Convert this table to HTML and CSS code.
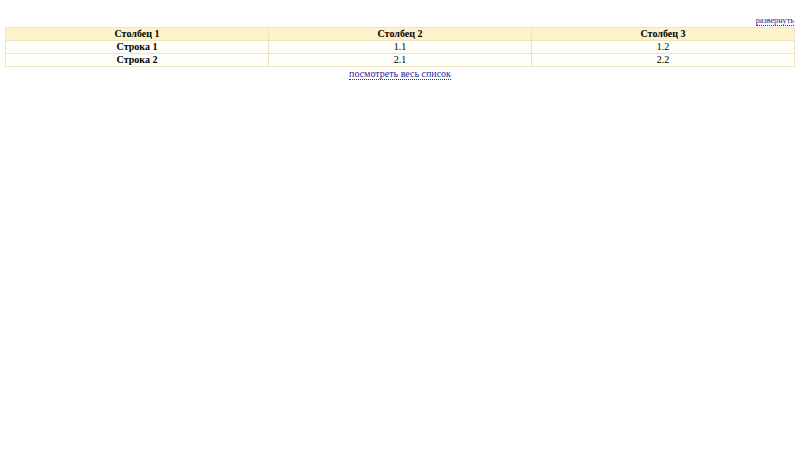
FILE: index.html
```html
<!DOCTYPE html>
<html lang="ru">
<head>
<meta charset="utf-8">
<link rel="stylesheet" href="styles.css">
</head>
<body>
<div class="wrap">
  <div class="tools"><a class="dotted small" href="#">развернуть</a></div>
  <table class="grid">
    <thead>
      <tr><th>Столбец 1</th><th>Столбец 2</th><th>Столбец 3</th></tr>
    </thead>
    <tbody>
      <tr><th>Строка 1</th><td>1.1</td><td>1.2</td></tr>
      <tr><th>Строка 2</th><td>2.1</td><td>2.2</td></tr>
    </tbody>
  </table>
  <div class="more"><a class="dotted" href="#">посмотреть весь список</a></div>
</div>
</body>
</html>
```
FILE: styles.css
```css
html, body {
  margin: 0;
  padding: 0;
  background: #fff;
}
body {
  font-family: "Liberation Serif", "Times New Roman", serif;
  color: #000;
}
.wrap {
  padding: 15px 5px 0 5px;
}
.tools {
  text-align: right;
  font-size: 8.2px;
  line-height: 12px;
  padding-right: 1px;
}
a.dotted {
  color: #2a2a9a;
  text-decoration: none;
  border-bottom: 1px dotted #2a2a9a;
}
.grid {
  width: 100%;
  border-collapse: collapse;
  font-size: 10px;
  line-height: 12px;
  table-layout: fixed;
}
.grid th, .grid td {
  border: 1px solid #ede5bf;
  padding: 0;
  text-align: center;
  background: #fffef8;
}
.grid thead th {
  background: #fdf2c9;
}
.more {
  text-align: center;
  font-size: 10px;
  line-height: 13px;
  padding-top: 0;
}
```
